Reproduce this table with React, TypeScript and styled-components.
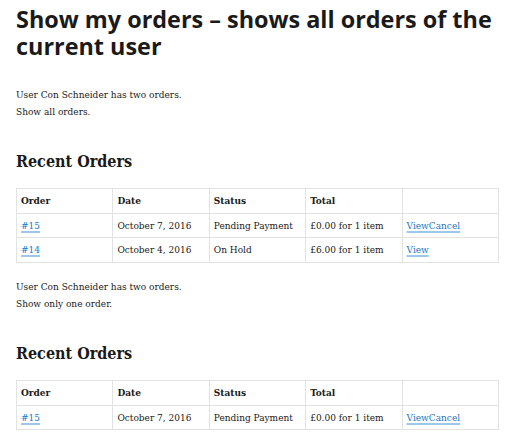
import React from "react";
import styled, { createGlobalStyle } from "styled-components";

const Global = createGlobalStyle`
  html, body { margin: 0; padding: 0; background: #ffffff; }
  body {
    font-family: "DejaVu Serif Condensed", "DejaVu Serif", "Liberation Serif", serif;
    font-stretch: condensed;
    color: #1a1a1a;
  }
`;

const Page = styled.div`
  padding: 5.5px 13px 0 16px;
`;

const Title = styled.h1`
  margin: 0;
  font-family: "Open Sans", "DejaVu Sans", sans-serif;
  font-stretch: normal;
  font-weight: 700;
  font-size: 23.4px;
  line-height: 27px;
  color: #1a1a1a;
`;

const Para = styled.p<{ $top: number }>`
  margin: ${(p) => p.$top}px 0 0;
  font-size: 10px;
  line-height: 17px;
  color: #1a1a1a;
`;

const Heading = styled.h2<{ $top: number }>`
  margin: ${(p) => p.$top}px 0 15px;
  font-weight: 700;
  font-size: 16px;
  line-height: 22px;
  color: #1a1a1a;
`;

const Table = styled.table`
  width: 483px;
  border-collapse: collapse;
  table-layout: fixed;
  font-size: 10px;
  line-height: 15.5px;
`;

const Th = styled.th`
  border: 1px solid #e2e2e2;
  padding: 4px 4px;
  text-align: left;
  font-weight: 700;
`;

const Td = styled.td`
  border: 1px solid #e2e2e2;
  padding: 4px 4px;
  white-space: nowrap;
`;

const Link = styled.a`
  color: #1b78cc;
  text-decoration: underline;
  text-decoration-color: #9cc8ee;
  text-decoration-thickness: 2px;
  text-underline-offset: 2px;
`;

type Order = { id: string; date: string; status: string; total: string; actions: string[] };

const OrdersTable = ({ orders }: { orders: Order[] }) => (
  <Table>
    <thead>
      <tr>
        <Th>Order</Th>
        <Th>Date</Th>
        <Th>Status</Th>
        <Th>Total</Th>
        <Th></Th>
      </tr>
    </thead>
    <tbody>
      {orders.map((o) => (
        <tr key={o.id}>
          <Td>
            <Link href="#">{o.id}</Link>
          </Td>
          <Td>{o.date}</Td>
          <Td>{o.status}</Td>
          <Td>{o.total}</Td>
          <Td>
            {o.actions.map((a) => (
              <Link key={a} href="#">
                {a}
              </Link>
            ))}
          </Td>
        </tr>
      ))}
    </tbody>
  </Table>
);

const o15: Order = {
  id: "#15",
  date: "October 7, 2016",
  status: "Pending Payment",
  total: "£0.00 for 1 item",
  actions: ["View", "Cancel"],
};
const o14: Order = {
  id: "#14",
  date: "October 4, 2016",
  status: "On Hold",
  total: "£6.00 for 1 item",
  actions: ["View"],
};

export default function App() {
  return (
    <Page>
      <Global />
      <Title>Show my orders – shows all orders of the current user</Title>
      <Para $top={26}>
        User Con Schneider has two orders.
        <br />
        Show all orders.
      </Para>
      <Heading $top={31.5}>Recent Orders</Heading>
      <OrdersTable orders={[o15, o14]} />
      <Para $top={15}>
        User Con Schneider has two orders.
        <br />
        Show only one order.
      </Para>
      <Heading $top={31.5}>Recent Orders</Heading>
      <OrdersTable orders={[o15]} />
    </Page>
  );
}
